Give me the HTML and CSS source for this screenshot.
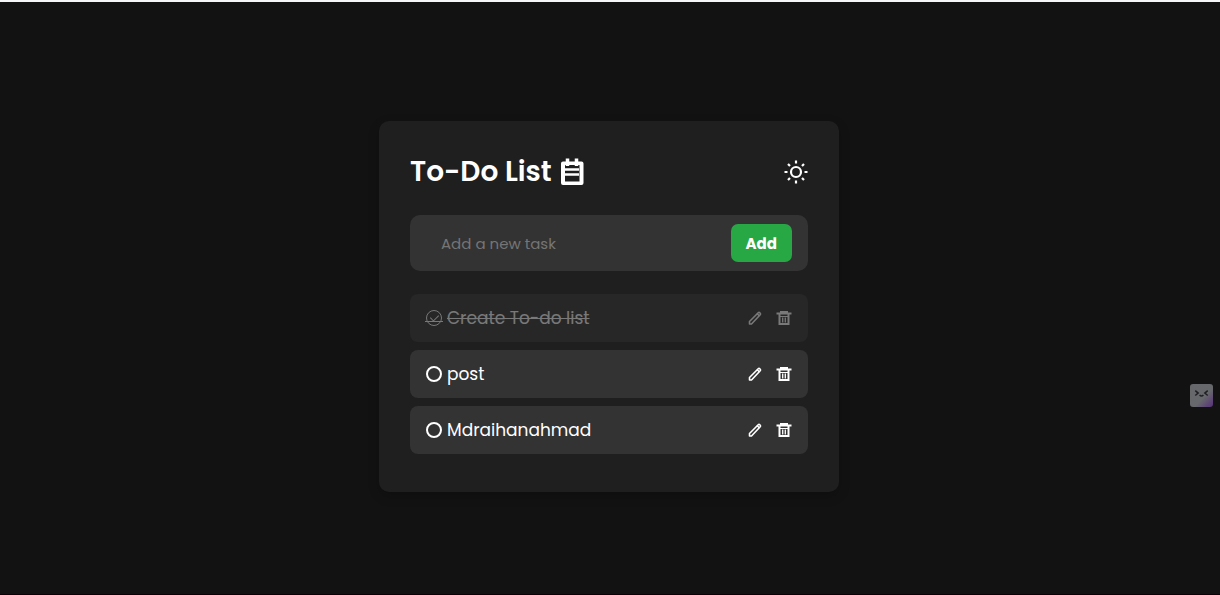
FILE: index.html
```
<!DOCTYPE html>
<html lang="en">
<head>
	<meta charset="utf-8">
	<meta name="viewport" content="width=device-width, initial-scale=1">
	<title>To-Do List</title>
	<link rel="stylesheet" href="styles.css">
</head>
<body>
	<!-- Shared icons -->
	<svg class="sprite" aria-hidden="true">
		<symbol id="pencil" viewBox="0 0 16 16">
			<path d="M2.500 14v-2.500L11.200 2.800q.8-.8 1.600 0l.4.4q.8.8 0 1.600L4.500 14z" fill="none" stroke="currentColor" stroke-width="1.600" stroke-linejoin="round"/>
			<path d="M10 3.500l2.500 2.500" stroke="currentColor" stroke-width="1.600"/>
		</symbol>
		<symbol id="trash" viewBox="0 0 16 16">
			<path d="M4 2.500V1h8v1.500h3.500v2H.5v-2z" fill="currentColor"/>
			<path d="M3.500 4v10h9V4" fill="none" stroke="currentColor" stroke-width="2"/>
			<path d="M4 6.500h8" stroke="currentColor"/>
			<path d="M6.700 7.500v5M9.300 7.500v5" stroke="currentColor" stroke-width="1.300"/>
		</symbol>
	</svg>

	<main class="page">
		<div class="todo-card">
			<header class="todo-header">
				<h1 class="title">
					To-Do List
					<svg class="title-icon" viewBox="0 0 24 28" aria-hidden="true">
						<path fill="currentColor" fill-rule="evenodd" d="M3 3.500h18.500q2 0 2 2V25q0 2-2 2H3q-2 0-2-2V5.500q0-2 2-2zM5 7v16.500h14.500V7z"/>
						<path d="M7.500 .5V8M16.500 .5V8" stroke="currentColor" stroke-width="3.500"/>
						<path d="M5 11.500h14M5 16.500h14" stroke="currentColor" stroke-width="2.600"/>
					</svg>
				</h1>
				<button type="button" class="icon-btn theme-btn" aria-label="Switch theme">
					<svg viewBox="0 0 24 24" fill="none" stroke="currentColor" stroke-width="2.200">
						<circle cx="12" cy="12" r="5"/>
						<path d="M12 .5v3M12 20.500v3M.5 12h3M20.500 12h3M4 4l2 2M18 18l2 2M4 20l2-2M18 6l2-2"/>
					</svg>
				</button>
			</header>

			<form class="add-form">
				<input type="text" class="task-input" placeholder="Add a new task" aria-label="Add a new task">
				<button type="button" class="add-btn">Add</button>
			</form>

			<ul class="task-list">
				<li class="task done">
					<input type="checkbox" id="task1" class="task-check" checked>
					<label for="task1" class="task-name">Create To-do list</label>
					<button type="button" class="icon-btn" aria-label="Edit"><svg><use href="#pencil"/></svg></button>
					<button type="button" class="icon-btn" aria-label="Delete"><svg><use href="#trash"/></svg></button>
				</li>
				<li class="task">
					<input type="checkbox" id="task2" class="task-check">
					<label for="task2" class="task-name">post</label>
					<button type="button" class="icon-btn" aria-label="Edit"><svg><use href="#pencil"/></svg></button>
					<button type="button" class="icon-btn" aria-label="Delete"><svg><use href="#trash"/></svg></button>
				</li>
				<li class="task">
					<input type="checkbox" id="task3" class="task-check">
					<label for="task3" class="task-name">Mdraihanahmad</label>
					<button type="button" class="icon-btn" aria-label="Edit"><svg><use href="#pencil"/></svg></button>
					<button type="button" class="icon-btn" aria-label="Delete"><svg><use href="#trash"/></svg></button>
				</li>
			</ul>
		</div>
	</main>

	<!-- Floating helper -->
	<button type="button" class="helper" aria-label="Helper">
		<svg viewBox="0 0 24 24" fill="none" stroke="#202024" stroke-width="1.600">
			<path d="M5.500 7l3 2.500-3 2.500M18.500 7l-3 2.500 3 2.500M10 11.500q2 2 4 0"/>
		</svg>
	</button>
</body>
</html>
```
FILE: styles.css
```
* {
	box-sizing: border-box;
}

body {
	margin: 0;
	min-height: 100vh;
	display: flex;
	flex-direction: column;
	border-top: 2px solid #f4f6f8;
	border-bottom: 1px solid #0a0006;
	background-color: #121212;
	color: #fff;
	font-family: Poppins, Inter, sans-serif;
}

.sprite {
	display: none;
}

.page {
	flex: 1;
	display: flex;
	justify-content: center;
	align-items: flex-start;
	padding: 119px 18px 16px 16px;
}

/* Card */
.todo-card {
	width: 100%;
	max-width: 460px;
	padding: 30px 31px 38px;
	border-radius: 10px;
	background-color: #1f1f1f;
	box-shadow: 0 4px 12px rgba(0, 0, 0, 0.2);
}

.todo-header {
	display: flex;
	justify-content: space-between;
	align-items: center;
	height: 41px;
	margin-bottom: 23px;
}

.title {
	display: flex;
	align-items: center;
	gap: 8px;
	margin: 0;
	font-size: 28px;
	font-weight: 600;
}

.title-icon {
	width: 24px;
	height: 28px;
}

.icon-btn {
	display: flex;
	padding: 0;
	border: none;
	background: none;
	color: inherit;
	cursor: pointer;
}

.icon-btn svg {
	width: 16px;
	height: 16px;
}

.theme-btn svg {
	width: 24px;
	height: 24px;
}

/* Form */
.add-form {
	display: flex;
	align-items: center;
	height: 56px;
	margin-bottom: 23px;
	padding: 0 16px 0 31px;
	border-radius: 10px;
	background-color: #333;
}

.task-input {
	flex: 1;
	min-width: 0;
	padding: 0;
	border: none;
	outline: none;
	background: none;
	color: #fff;
	font-family: inherit;
	font-size: 15px;
}

.task-input::placeholder {
	color: #757575;
}

.add-btn {
	height: 38px;
	padding: 0 15px;
	border: none;
	border-radius: 7px;
	background-color: #28a745;
	color: #fff;
	font-family: inherit;
	font-size: 15px;
	font-weight: 700;
	cursor: pointer;
}

/* Tasks */
.task-list {
	display: flex;
	flex-direction: column;
	gap: 8px;
	margin: 0;
	padding: 0;
	list-style: none;
}

.task {
	display: flex;
	align-items: center;
	gap: 13px;
	height: 48px;
	padding: 0 16px;
	border-radius: 8px;
	background-color: #333;
}

.task-check {
	position: relative;
	appearance: none;
	width: 16px;
	height: 16px;
	margin: 0 -8px 0 0;
	border: 2px solid #fff;
	border-radius: 50%;
}

.task-name {
	flex: 1;
	font-size: 17px;
}

.done {
	opacity: 0.4;
}

.done .task-name {
	text-decoration: line-through;
	text-decoration-thickness: 1px;
}

.done .task-check {
	border-width: 1px;
}

/* tick and its strike line */
.done .task-check::before {
	content: "";
	position: absolute;
	left: 5px;
	top: 2px;
	width: 4px;
	height: 7px;
	border: solid #fff;
	border-width: 0 1px 1px 0;
	transform: rotate(45deg);
}

.done .task-check::after {
	content: "";
	position: absolute;
	left: -2px;
	right: -2px;
	top: 10px;
	height: 1px;
	background-color: #fff;
}

.helper {
	position: fixed;
	right: 7px;
	top: 384px;
	width: 23px;
	height: 23px;
	padding: 0;
	border: none;
	border-radius: 3px;
	background: linear-gradient(135deg, #66686c 60%, #57307c);
}

.helper svg {
	display: block;
}
```
